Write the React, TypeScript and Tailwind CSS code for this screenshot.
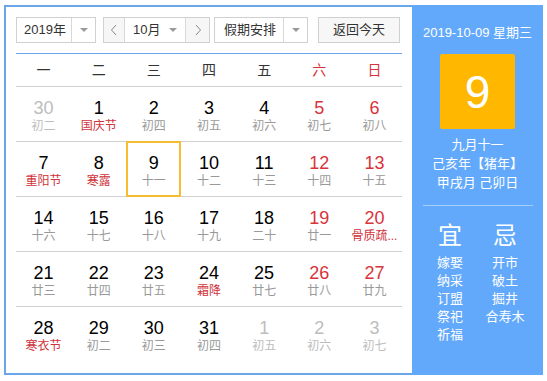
import React from 'react';

type Day = {
  n: number;
  lunar: string;
  other?: boolean;
  festival?: boolean;
  weekend?: boolean;
  selected?: boolean;
};

const WEEKDAYS = ['一', '二', '三', '四', '五', '六', '日'];

// Calendar rows for October 2019
const ROWS: Day[][] = [
  [
    { n: 30, lunar: '初二', other: true },
    { n: 1, lunar: '国庆节', festival: true },
    { n: 2, lunar: '初四' },
    { n: 3, lunar: '初五' },
    { n: 4, lunar: '初六' },
    { n: 5, lunar: '初七', weekend: true },
    { n: 6, lunar: '初八', weekend: true },
  ],
  [
    { n: 7, lunar: '重阳节', festival: true },
    { n: 8, lunar: '寒露', festival: true },
    { n: 9, lunar: '十一', selected: true },
    { n: 10, lunar: '十二' },
    { n: 11, lunar: '十三' },
    { n: 12, lunar: '十四', weekend: true },
    { n: 13, lunar: '十五', weekend: true },
  ],
  [
    { n: 14, lunar: '十六' },
    { n: 15, lunar: '十七' },
    { n: 16, lunar: '十八' },
    { n: 17, lunar: '十九' },
    { n: 18, lunar: '二十' },
    { n: 19, lunar: '廿一', weekend: true },
    { n: 20, lunar: '骨质疏...', weekend: true, festival: true },
  ],
  [
    { n: 21, lunar: '廿三' },
    { n: 22, lunar: '廿四' },
    { n: 23, lunar: '廿五' },
    { n: 24, lunar: '霜降', festival: true },
    { n: 25, lunar: '廿七' },
    { n: 26, lunar: '廿八', weekend: true },
    { n: 27, lunar: '廿九', weekend: true },
  ],
  [
    { n: 28, lunar: '寒衣节', festival: true },
    { n: 29, lunar: '初二' },
    { n: 30, lunar: '初三' },
    { n: 31, lunar: '初四' },
    { n: 1, lunar: '初五', other: true },
    { n: 2, lunar: '初六', other: true },
    { n: 3, lunar: '初七', other: true },
  ],
];

const YI = ['嫁娶', '纳采', '订盟', '祭祀', '祈福'];
const JI = ['开市', '破土', '掘井', '合寿木'];

function Caret() {
  return <span className="block w-0 h-0 border-l-[4px] border-r-[4px] border-t-[4px] border-l-transparent border-r-transparent border-t-[#9a9a9a]" />;
}

function Chevron({ dir }: { dir: 'left' | 'right' }) {
  return (
    <svg width="8" height="12" viewBox="0 0 8 12" fill="none" stroke="#888" strokeWidth="1">
      {dir === 'left' ? <path d="M6 1 L1.5 6 L6 11" /> : <path d="M2 1 L6.5 6 L2 11" />}
    </svg>
  );
}

function Toolbar() {
  return (
    <div className="flex items-center h-[26px] text-[13px] text-[#333]">
      <div className="flex h-full w-[80px] border border-[#d0d0d0] bg-white">
        <div className="flex-1 flex items-center justify-center pl-[2px]">2019年</div>
        <div className="w-[24px] border-l border-[#d8d8d8] flex items-center justify-center">
          <Caret />
        </div>
      </div>
      <div className="flex h-full w-[107px] ml-[7px] border border-[#d0d0d0] bg-white">
        <div className="w-[21px] bg-[#f6f6f6] border-r border-[#d8d8d8] flex items-center justify-center">
          <Chevron dir="left" />
        </div>
        <div className="flex-1 flex items-center pl-[8px] gap-[9px]">
          <span>10月</span>
          <Caret />
        </div>
        <div className="w-[24px] bg-[#f6f6f6] border-l border-[#d8d8d8] flex items-center justify-center">
          <Chevron dir="right" />
        </div>
      </div>
      <div className="flex h-full w-[94px] ml-[4px] border border-[#d0d0d0] bg-white">
        <div className="flex-1 flex items-center justify-center pl-[2px]">假期安排</div>
        <div className="w-[24px] border-l border-[#d8d8d8] flex items-center justify-center">
          <Caret />
        </div>
      </div>
      <div className="flex h-full w-[82px] ml-[10px] border border-[#d0d0d0] bg-[#f7f7f7] items-center justify-center">
        返回今天
      </div>
    </div>
  );
}

function DayCell({ d }: { d: Day }) {
  const numColor = d.other ? 'text-[#bdbdbd]' : d.weekend ? 'text-[#d8333b]' : 'text-black';
  const lunarColor = d.other ? 'text-[#bdbdbd]' : d.festival ? 'text-[#d0333a]' : 'text-[#999]';
  return (
    <div className="relative flex flex-col items-center pt-[11px]">
      <div className={`text-[18px] leading-[20px] ${numColor}`}>{d.n}</div>
      <div className={`text-[12px] leading-[16px] whitespace-nowrap ${lunarColor}`}>{d.lunar}</div>
      {d.selected && <div className="absolute -top-px -bottom-px left-0 right-0 border-2 border-[#f5bd2f]" />}
    </div>
  );
}

function CalendarGrid() {
  return (
    <div className="mt-[10px] border-t border-[#6aa7ea]">
      <div className="grid grid-cols-7 h-[33px] items-center border-b border-[#d0d0d0] text-[14px]">
        {WEEKDAYS.map((w, i) => (
          <div key={w} className={`text-center ${i >= 5 ? 'text-[#d8333b]' : 'text-[#333]'}`}>
            {w}
          </div>
        ))}
      </div>
      {ROWS.map((row, r) => (
        <div key={r} className={`grid grid-cols-7 h-[55px] ${r < ROWS.length - 1 ? 'border-b border-[#d0d0d0]' : ''}`}>
          {row.map((d, i) => (
            <DayCell key={i} d={d} />
          ))}
        </div>
      ))}
    </div>
  );
}

function SidePanel() {
  return (
    <div className="w-[131px] -mt-[2px] -mr-[2px] -mb-[2px] bg-[#63a9fb] text-white flex flex-col items-center">
      <div className="mt-[19px] text-[13px] leading-[18px]">2019-10-09 星期三</div>
      <div className="mt-[12px] w-[75px] h-[75px] rounded-[2px] bg-[#ffb700] flex items-center justify-center text-[46px] leading-none font-['Liberation_Sans',sans-serif]">
        9
      </div>
      <div className="mt-[6px] text-[13px] leading-[19px] text-center">
        <div>九月十一</div>
        <div>己亥年【猪年】</div>
        <div>甲戌月 己卯日</div>
      </div>
      <div className="mt-[13px] w-[110px] border-t border-[#a6cdfb]" />
      <div className="mt-[16px] w-[110px] grid grid-cols-2">
        <div className="flex flex-col items-center">
          <div className="text-[24px] leading-[28px]">宜</div>
          <div className="mt-[4px] text-[13px] leading-[18px] flex flex-col items-center">
            {YI.map((t) => (
              <div key={t}>{t}</div>
            ))}
          </div>
        </div>
        <div className="flex flex-col items-center">
          <div className="text-[24px] leading-[28px]">忌</div>
          <div className="mt-[4px] text-[13px] leading-[18px] flex flex-col items-center">
            {JI.map((t) => (
              <div key={t}>{t}</div>
            ))}
          </div>
        </div>
      </div>
    </div>
  );
}

export default function App() {
  return (
    <div className="w-[547px] h-[381px] bg-white pt-[5px] pl-[4px] font-['Liberation_Sans','Noto_Sans_CJK_SC',sans-serif]">
      <div className="flex w-[539px] h-[370px] border-2 border-[#6aa7ea]">
        <div className="flex-1 pt-[10px] pl-[10px] pr-[10px]">
          <Toolbar />
          <CalendarGrid />
        </div>
        <SidePanel />
      </div>
    </div>
  );
}
